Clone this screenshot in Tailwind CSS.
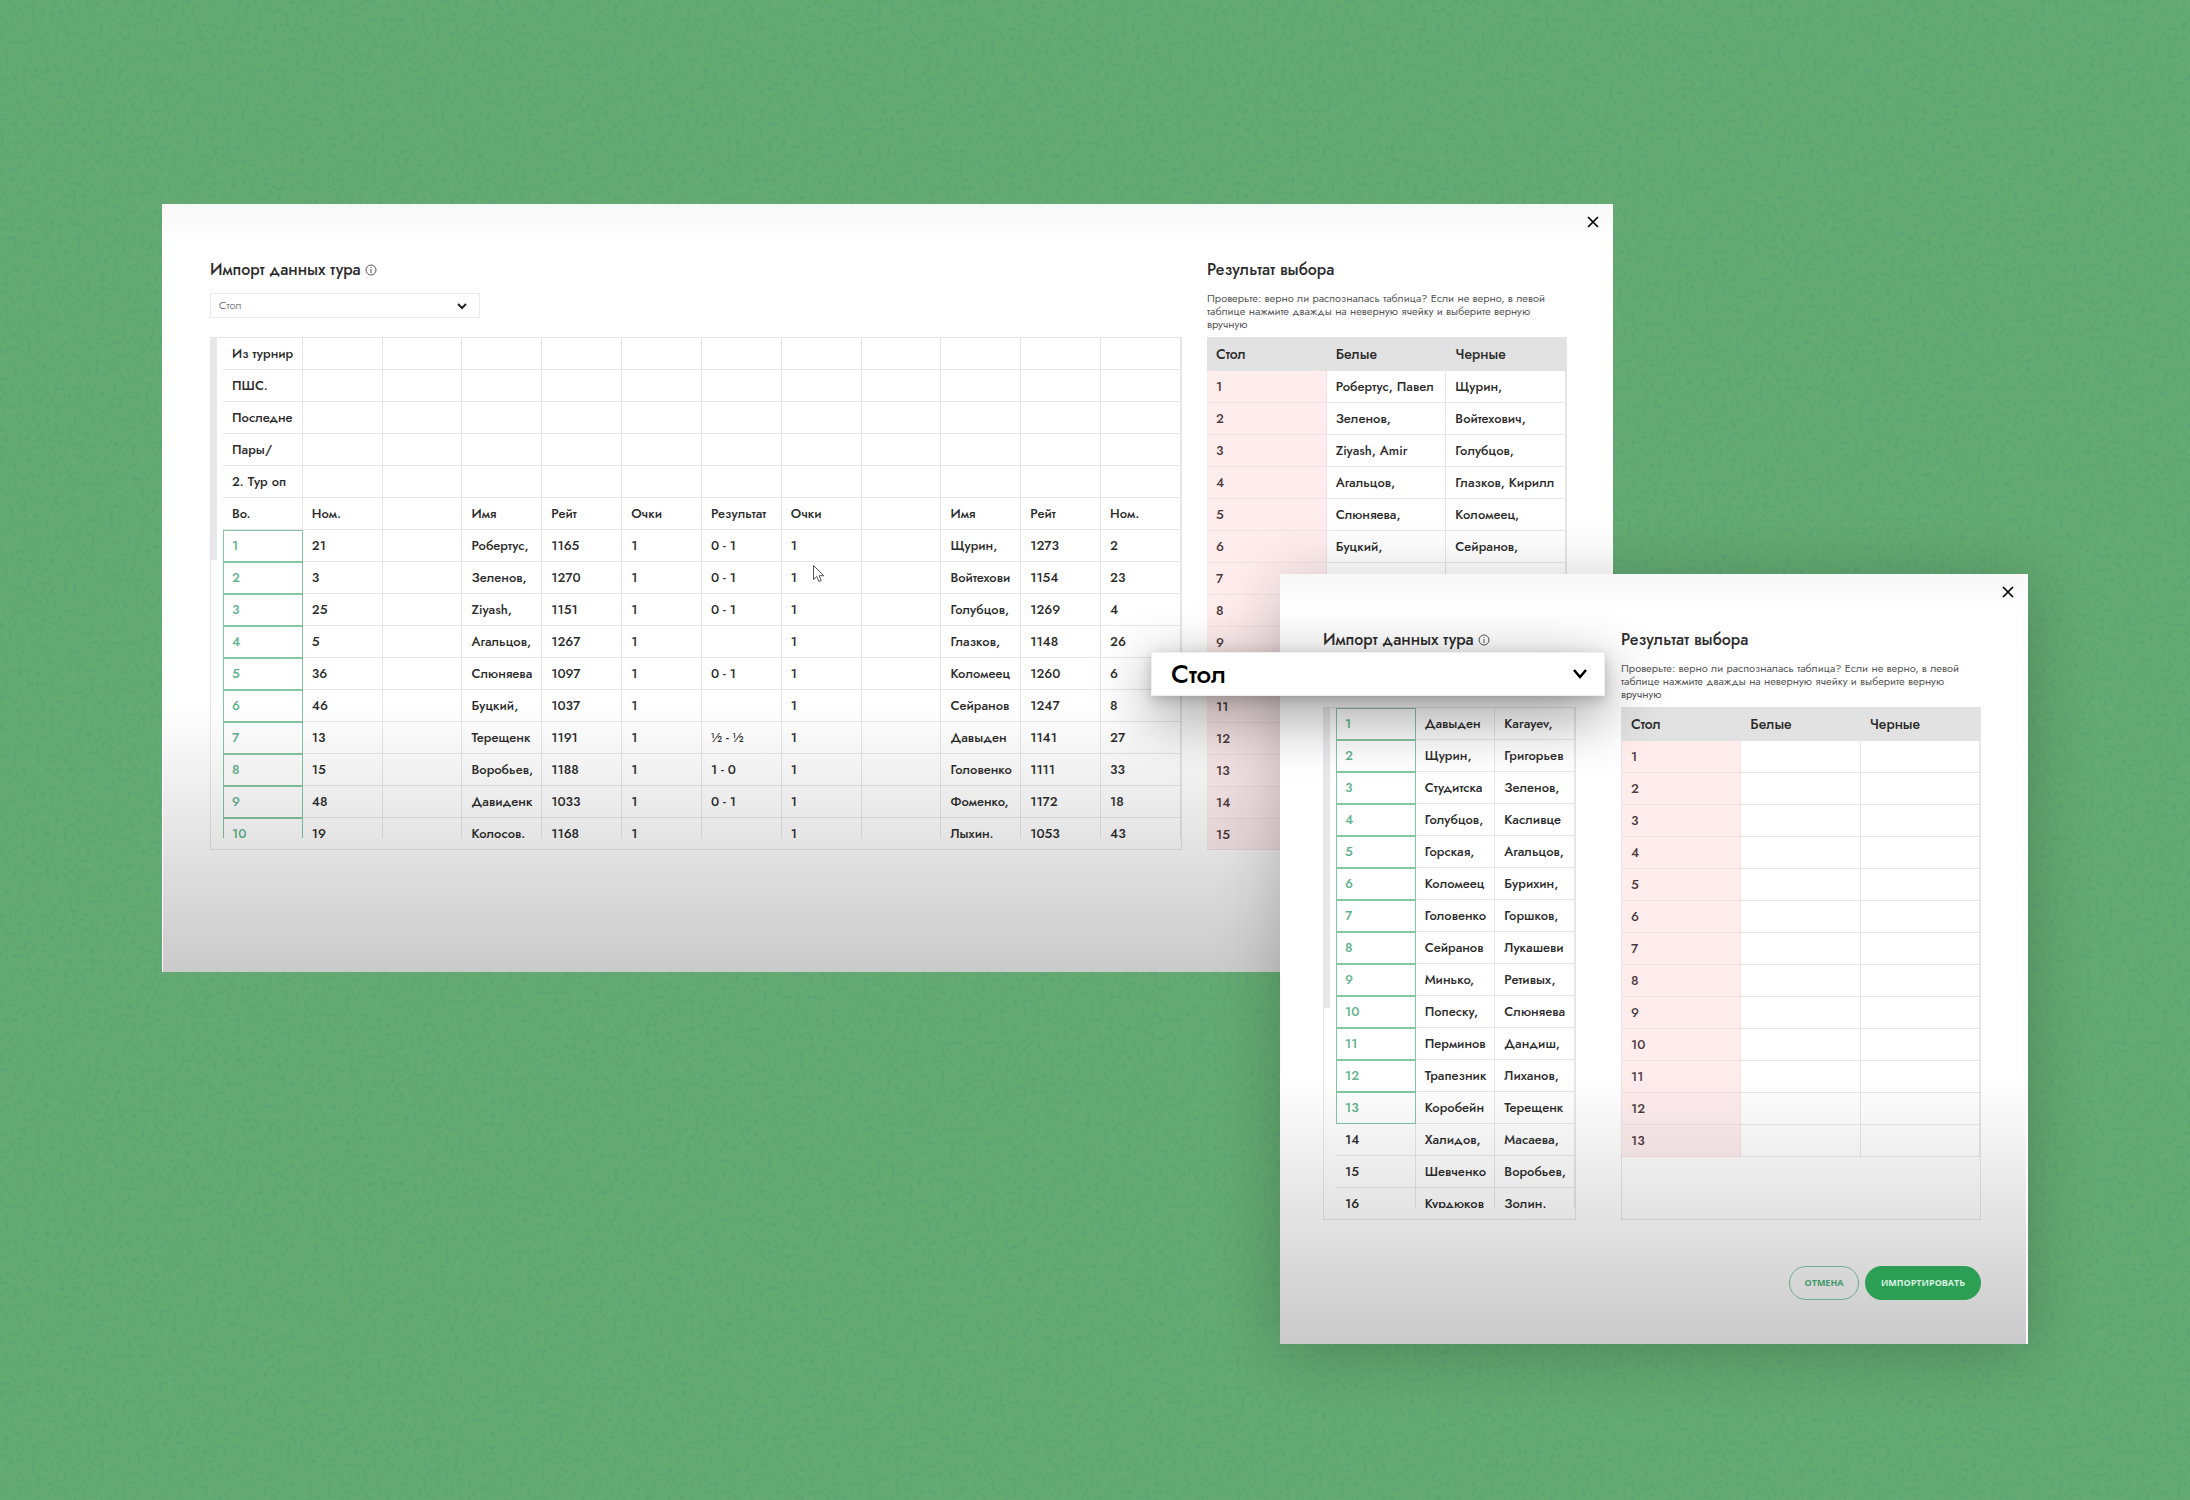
<!DOCTYPE html>
<html lang="ru">
<head>
<meta charset="utf-8">
<meta name="viewport" content="width=device-width, initial-scale=1">
<title>Импорт данных тура</title>
<script src="https://cdn.jsdelivr.net/npm/@tailwindcss/browser@4"></script>
</head>
<body class="font-['Jost','Lato',sans-serif] text-[#2b2b2b]">
<main class="relative min-h-screen overflow-hidden bg-[#64aa72]">
  <!-- paper texture -->
  <svg class="absolute inset-0 h-full w-full" aria-hidden="true">
    <filter id="grain" x="0" y="0" width="100%" height="100%">
      <feTurbulence type="fractalNoise" baseFrequency="0.22" numOctaves="3" seed="4"/>
      <feColorMatrix values="0 0 0 0 0.1  0 0 0 0 0.34  0 0 0 0 0.18  0 0 0 4 -2.05"/>
    </filter>
    <rect width="100%" height="100%" filter="url(#grain)" opacity="0.5"/>
  </svg>

  <!-- large import dialog -->
  <section aria-label="Импорт данных тура" class="absolute left-[162px] right-[577px] top-[204px] h-[768px] bg-white">
    <button type="button" aria-label="Закрыть" class="absolute right-3 top-[10px] grid size-4 place-items-center text-black">
      <svg class="size-3" viewBox="0 0 12 12" fill="none" stroke="currentColor" stroke-width="1.700"><path d="M1 1l10 10M11 1L1 11"/></svg>
    </button>
    <div class="flex gap-[25px] pl-12 pr-[46px] pt-14">
      <div class="min-w-0 flex-1">
        <h2 class="flex h-5 items-center gap-1 text-base font-medium leading-5">Импорт данных тура
          <svg class="size-3" viewBox="0 0 12 12" fill="none" stroke="#555"><circle cx="6" cy="6" r="5"/><path d="M6 5v4M6 3v1"/></svg>
        </h2>
        <label class="relative mt-[13px] flex h-[25px] w-[270px] items-center">
          <span class="sr-only">Тип столбца</span>
          <select class="h-full w-full appearance-none border border-[#ebebeb] bg-white px-2 text-[11px] font-light text-[#444]"><option>Стол</option></select>
          <svg class="pointer-events-none absolute right-3 h-2 w-3" viewBox="0 0 12 8" fill="none" stroke="#222" stroke-width="2"><path d="M2 2l4 4 4-4"/></svg>
        </label>
        <div class="relative mt-[19px] h-[513px] border border-[#e6e6e8] pl-3">
          <div class="absolute left-0 top-0 h-[222px] w-[6px] bg-[#e8e8ea]"></div>
          <div class="h-[500px] overflow-hidden">
            <table id="tour" class="w-full table-fixed border-separate border-spacing-0 text-[13px] font-medium"></table>
          </div>
        </div>
      </div>
      <div class="w-[360px]">
        <h2 class="h-5 text-base font-medium leading-5">Результат выбора</h2>
        <p class="mb-[6px] mt-3 h-[39px] whitespace-nowrap text-[11px] leading-[13px] text-[#555]">Проверьте: верно ли распозналась таблица? Если не верно, в левой<br>таблице нажмите дважды на неверную ячейку и выберите верную<br>вручную</p>
        <div class="h-[513px] overflow-hidden border-b border-r border-[#e6e6e8]">
          <table id="tourResult" class="w-full table-fixed border-separate border-spacing-0 text-[13px] font-medium"></table>
        </div>
      </div>
    </div>
    <svg class="absolute left-[650px] top-[360px] h-[20px] w-[14px]" viewBox="0 0 14 20" fill="#fff" stroke="#555" aria-hidden="true"><path d="M1.500 1.500v14l3.300-3 2 5 2.400-1-2-4.800h4.500z"/></svg>
    <div class="pointer-events-none absolute inset-y-0 left-px right-0 bg-linear-to-b from-transparent from-65% to-black/21"></div>
    <div class="pointer-events-none absolute inset-x-0 top-0 h-9 bg-linear-to-b from-black/3 to-transparent"></div>
  </section>

  <!-- small import dialog -->
  <section aria-label="Импорт данных тура" class="absolute right-[162px] top-[574px] h-[770px] w-[748px] bg-white shadow-[0_8px_60px_rgba(0,0,0,0.22)]">
    <button type="button" aria-label="Закрыть" class="absolute right-3 top-[10px] grid size-4 place-items-center text-black">
      <svg class="size-3" viewBox="0 0 12 12" fill="none" stroke="currentColor" stroke-width="1.700"><path d="M1 1l10 10M11 1L1 11"/></svg>
    </button>
    <div class="flex gap-[45px] pl-[43px] pr-[47px] pt-14">
      <div class="min-w-0 flex-1">
        <h2 class="flex h-5 items-center gap-1 text-base font-medium leading-5">Импорт данных тура
          <svg class="size-3" viewBox="0 0 12 12" fill="none" stroke="#555"><circle cx="6" cy="6" r="5"/><path d="M6 5v4M6 3v1"/></svg>
        </h2>
        <div class="relative mt-[57px] h-[513px] border border-[#e6e6e8] pl-3">
          <div class="absolute left-0 top-0 h-[300px] w-[6px] bg-[#e8e8ea]"></div>
          <div class="h-[500px] overflow-hidden">
            <table id="pairs" class="w-full table-fixed border-separate border-spacing-0 text-[13px] font-medium"></table>
          </div>
        </div>
      </div>
      <div class="w-[360px]">
        <h2 class="h-5 text-base font-medium leading-5">Результат выбора</h2>
        <p class="mb-[6px] mt-3 h-[39px] whitespace-nowrap text-[11px] leading-[13px] text-[#555]">Проверьте: верно ли распозналась таблица? Если не верно, в левой<br>таблице нажмите дважды на неверную ячейку и выберите верную<br>вручную</p>
        <div class="h-[513px] overflow-hidden border-x border-b border-[#e6e6e8]">
          <table id="pairsResult" class="w-full table-fixed border-separate border-spacing-0 text-[13px] font-medium"></table>
        </div>
      </div>
    </div>
    <div class="pointer-events-none absolute inset-y-0 left-0 right-[2px] bg-linear-to-b from-transparent from-65% to-black/21"></div>
    <div class="pointer-events-none absolute inset-x-0 top-0 h-9 bg-linear-to-b from-black/3 to-transparent"></div>
    <div class="relative mt-[46px] flex justify-end gap-[6px] pr-[47px]">
      <button type="button" class="h-[34px] w-[70px] rounded-full border border-[#6fae8b] font-['Open_Sans',sans-serif] text-[9px] font-bold text-[#3f9a69]">ОТМЕНА</button>
      <button type="button" class="h-[34px] w-[116px] rounded-full bg-[#2c9f55] font-['Open_Sans',sans-serif] text-[9px] font-bold text-[#d9f2e1]">ИМПОРТИРОВАТЬ</button>
    </div>
    <!-- enlarged column selector -->
    <label class="absolute -left-[129px] top-[78px] flex h-[44px] w-[454px] items-center shadow-[0_18px_60px_rgba(0,0,0,0.45),0_4px_12px_rgba(0,0,0,0.2)]">
      <span class="sr-only">Тип столбца</span>
      <select class="h-full w-full appearance-none border border-[#f0f0f0] bg-white px-[19px] text-[26px] leading-8 font-medium text-black"><option>Стол</option></select>
      <svg class="pointer-events-none absolute right-[17px] h-3 w-4" viewBox="0 0 16 12" fill="none" stroke="#000" stroke-width="2.500"><path d="M2 2l6 7 6-7"/></svg>
    </label>
  </section>
</main>

<script>
const td = 'h-8 whitespace-nowrap border-b border-r border-[#e6e6e8] px-[9px] py-0';
const tdGreen = 'h-8 whitespace-nowrap px-[9px] py-0 text-[#5cb389] shadow-[inset_0_0_0_1px_#84c5a4]';
const tdPink = 'h-8 whitespace-nowrap border-b border-r border-[#f3e1e4] bg-[#ffedee] px-[9px] py-0 text-[#4d3a3d]';
const tdPlain = 'h-8 whitespace-nowrap border-b border-r border-[#e6e6e8] px-[9px] py-0';
const th = 'h-[34px] bg-[#e2e2e2] px-[9px] py-0 text-left text-sm font-medium';

const fillGrid = (id, rows, isGreen) => {
  document.getElementById(id).innerHTML = rows.map((r, i) =>
    '<tr>' + r.map((c, j) => `<td class="${j === 0 && isGreen(i) ? tdGreen : td}">${c}</td>`).join('') + '</tr>').join('');
};
const fillResult = (id, rows) => {
  document.getElementById(id).innerHTML =
    '<thead><tr>' + ['Стол', 'Белые', 'Черные'].map(c => `<th scope="col" class="${th}">${c}</th>`).join('') + '</tr></thead><tbody>' +
    rows.map((r, i) => `<tr><td class="${tdPink}">${i + 1}</td><td class="${tdPlain}">${r[0]}</td><td class="${tdPlain}">${r[1]}</td></tr>`).join('') + '</tbody>';
};

const single = t => [t, ...Array(11).fill('')];
fillGrid('tour', [
  single('Из турнир'), single('ПШС.'), single('Последне'), single('Пары/'), single('2. Тур оп'),
  ['Во.', 'Ном.', '', 'Имя', 'Рейт', 'Очки', 'Результат', 'Очки', '', 'Имя', 'Рейт', 'Ном.'],
  ['1', '21', '', 'Робертус,', '1165', '1', '0 - 1', '1', '', 'Щурин,', '1273', '2'],
  ['2', '3', '', 'Зеленов,', '1270', '1', '0 - 1', '1', '', 'Войтехови', '1154', '23'],
  ['3', '25', '', 'Ziyash,', '1151', '1', '0 - 1', '1', '', 'Голубцов,', '1269', '4'],
  ['4', '5', '', 'Агальцов,', '1267', '1', '', '1', '', 'Глазков,', '1148', '26'],
  ['5', '36', '', 'Слюняева', '1097', '1', '0 - 1', '1', '', 'Коломеец', '1260', '6'],
  ['6', '46', '', 'Буцкий,', '1037', '1', '', '1', '', 'Сейранов', '1247', '8'],
  ['7', '13', '', 'Терещенк', '1191', '1', '½ - ½', '1', '', 'Давыден', '1141', '27'],
  ['8', '15', '', 'Воробьев,', '1188', '1', '1 - 0', '1', '', 'Головенко', '1111', '33'],
  ['9', '48', '', 'Давиденк', '1033', '1', '0 - 1', '1', '', 'Фоменко,', '1172', '18'],
  ['10', '19', '', 'Колосов.', '1168', '1', '', '1', '', 'Лыхин.', '1053', '43']
], i => i > 5);

fillGrid('pairs', [
  ['1', 'Давыден', 'Karayev,'], ['2', 'Щурин,', 'Григорьев'], ['3', 'Студитска', 'Зеленов,'],
  ['4', 'Голубцов,', 'Касливце'], ['5', 'Горская,', 'Агальцов,'], ['6', 'Коломеец', 'Бурихин,'],
  ['7', 'Головенко', 'Горшков,'], ['8', 'Сейранов', 'Лукашеви'], ['9', 'Минько,', 'Ретивых,'],
  ['10', 'Попеску,', 'Слюняева'], ['11', 'Перминов', 'Дандиш,'], ['12', 'Трапезник', 'Лиханов,'],
  ['13', 'Коробейн', 'Терещенк'], ['14', 'Халидов,', 'Масаева,'], ['15', 'Шевченко', 'Воробьев,'],
  ['16', 'Курдюков', 'Золин.']
], i => i < 13);

fillResult('tourResult', [
  ['Робертус, Павел', 'Щурин,'], ['Зеленов,', 'Войтехович,'], ['Ziyash, Amir', 'Голубцов,'],
  ['Агальцов,', 'Глазков, Кирилл'], ['Слюняева,', 'Коломеец,'], ['Буцкий,', 'Сейранов,'],
  ...Array(9).fill(['', ''])
]);
fillResult('pairsResult', Array(13).fill(['', '']));
</script>
</body>
</html>
